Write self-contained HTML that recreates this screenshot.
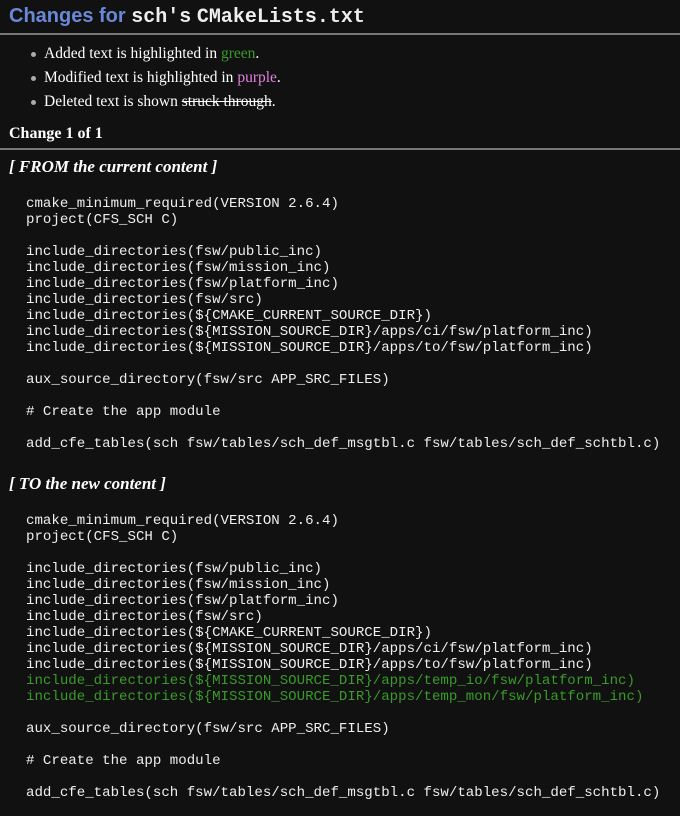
<!DOCTYPE html>
<html><head><style>
html,body{margin:0;background:#111;width:680px;height:816px;overflow:hidden;color:#fff}
.a{position:absolute;white-space:pre;line-height:16px}
h1{position:absolute;left:9px;top:5px;margin:0;font:bold 20px "Liberation Sans",sans-serif;color:#6a88d8;white-space:pre}
h1 code{font-family:"Liberation Mono",monospace;color:#eee;font-size:20px}
.hr{position:absolute;left:0;width:680px;height:2px;background:#777}
.s{font-family:"Liberation Serif",serif;font-size:15.5px}
.m{font-family:"Liberation Mono",monospace;font-size:14.1px;color:#eee;left:26px}
.g{color:#3a9a2a}
.dot{position:absolute;width:5px;height:5px;border-radius:50%;background:#aaa;left:31px}
.h{font-weight:bold;font-style:italic;font-size:17px;letter-spacing:0}
</style></head><body>
<h1>Changes for <code>sch's</code> <code>CMakeLists.txt</code></h1>
<div class="hr" style="top:33px"></div>
<div class="dot" style="top:52px"></div><div class="a s" style="left:44px;top:46px">Added text is highlighted in <span style="color:#3a9a2a">green</span>.</div>
<div class="dot" style="top:76px"></div><div class="a s" style="left:44px;top:70px">Modified text is highlighted in <span style="color:#e080e0">purple</span>.</div>
<div class="dot" style="top:100px"></div><div class="a s" style="left:44px;top:94px">Deleted text is shown <s>struck through</s>.</div>
<div class="a s" style="left:9px;top:126px;font-weight:bold;font-size:16px">Change 1 of 1</div>
<div class="hr" style="top:148px"></div>
<div class="a s h" style="left:9px;top:159px">[ FROM the current content ]</div>
<div class="a m" style="top:196px">cmake_minimum_required(VERSION 2.6.4)
project(CFS_SCH C)

include_directories(fsw/public_inc)
include_directories(fsw/mission_inc)
include_directories(fsw/platform_inc)
include_directories(fsw/src)
include_directories(${CMAKE_CURRENT_SOURCE_DIR})
include_directories(${MISSION_SOURCE_DIR}/apps/ci/fsw/platform_inc)
include_directories(${MISSION_SOURCE_DIR}/apps/to/fsw/platform_inc)

aux_source_directory(fsw/src APP_SRC_FILES)

# Create the app module

add_cfe_tables(sch fsw/tables/sch_def_msgtbl.c fsw/tables/sch_def_schtbl.c)</div>
<div class="a s h" style="left:9px;top:476px">[ TO the new content ]</div>
<div class="a m" style="top:513px">cmake_minimum_required(VERSION 2.6.4)
project(CFS_SCH C)

include_directories(fsw/public_inc)
include_directories(fsw/mission_inc)
include_directories(fsw/platform_inc)
include_directories(fsw/src)
include_directories(${CMAKE_CURRENT_SOURCE_DIR})
include_directories(${MISSION_SOURCE_DIR}/apps/ci/fsw/platform_inc)
include_directories(${MISSION_SOURCE_DIR}/apps/to/fsw/platform_inc)
<span class="g">include_directories(${MISSION_SOURCE_DIR}/apps/temp_io/fsw/platform_inc)
include_directories(${MISSION_SOURCE_DIR}/apps/temp_mon/fsw/platform_inc)</span>

aux_source_directory(fsw/src APP_SRC_FILES)

# Create the app module

add_cfe_tables(sch fsw/tables/sch_def_msgtbl.c fsw/tables/sch_def_schtbl.c)</div>
</body></html>
